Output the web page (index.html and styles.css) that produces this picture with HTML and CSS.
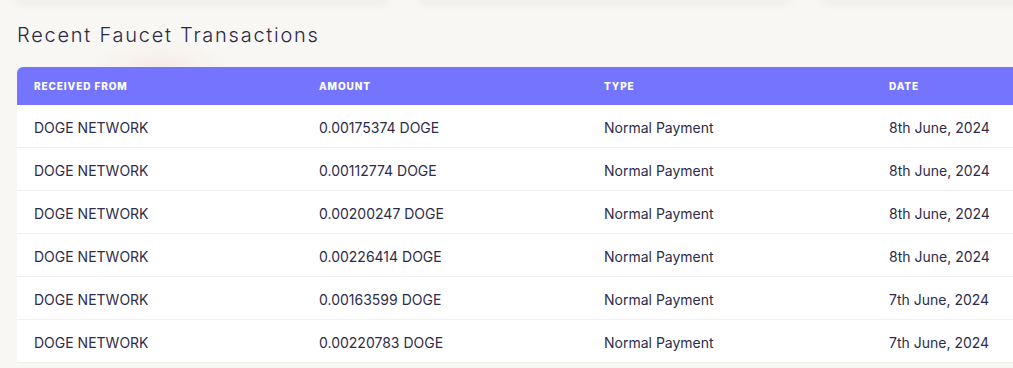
FILE: index.html
```html
<!DOCTYPE html>
<html>
<head>
<meta charset="utf-8">
<link rel="stylesheet" href="styles.css">
</head>
<body>
<div class="page">
  <div class="cards">
    <div class="card"></div>
    <div class="card"></div>
    <div class="card"></div>
  </div>
  <h2 class="title">Recent Faucet Transactions</h2>
  <div class="table-wrap">
    <table class="tx">
      <thead>
        <tr><th>Received From</th><th>Amount</th><th>Type</th><th>Date</th></tr>
      </thead>
      <tbody>
        <tr><td>DOGE NETWORK</td><td>0.00175374 DOGE</td><td>Normal Payment</td><td>8th June, 2024</td></tr>
        <tr><td>DOGE NETWORK</td><td>0.00112774 DOGE</td><td>Normal Payment</td><td>8th June, 2024</td></tr>
        <tr><td>DOGE NETWORK</td><td>0.00200247 DOGE</td><td>Normal Payment</td><td>8th June, 2024</td></tr>
        <tr><td>DOGE NETWORK</td><td>0.00226414 DOGE</td><td>Normal Payment</td><td>8th June, 2024</td></tr>
        <tr><td>DOGE NETWORK</td><td>0.00163599 DOGE</td><td>Normal Payment</td><td>7th June, 2024</td></tr>
        <tr><td>DOGE NETWORK</td><td>0.00220783 DOGE</td><td>Normal Payment</td><td>7th June, 2024</td></tr>
      </tbody>
    </table>
  </div>
</div>
</body>
</html>
```
FILE: styles.css
```css
html, body {
  margin: 0;
  padding: 0;
  height: 100%;
  overflow: hidden;
}
body {
  background: #f8f7f4;
  font-family: Inter, "Noto Sans", sans-serif;
  color: #2e2c4a;
}
.page {
  padding: 0 0 0 17px;
  background: radial-gradient(ellipse 70px 30px at 160px 68px, rgba(240, 215, 205, 0.35), rgba(248, 247, 244, 0));
}
.cards {
  display: flex;
  gap: 33px;
  height: 0;
  margin-right: -200px;
}
.card {
  flex: 0 0 370px;
  height: 0;
  border-radius: 8px;
  box-shadow: 0 1px 9px 1px rgba(0, 0, 0, 0.16);
  background: #fff;
}
.title {
  margin: 0;
  padding-top: 22px;
  font-size: 20px;
  line-height: 26px;
  font-weight: 300;
  letter-spacing: 1.75px;
  color: #2b2a45;
}
.table-wrap {
  margin-top: 19px;
  width: 1140px;
  border-radius: 6px 6px 0 0;
  overflow: hidden;
  background: #fff;
}
.tx {
  width: 1140px;
  border-collapse: collapse;
  table-layout: fixed;
}
.tx th {
  background: #7574ff;
  color: #fff;
  text-align: left;
  text-transform: uppercase;
  font-size: 10px;
  font-weight: 800;
  letter-spacing: 0.9px;
  height: 38px;
  padding: 0 17px;
}
.tx td {
  height: 40px;
  padding: 2px 17px 0;
  font-size: 14px;
  color: #2e2c4a;
  border-bottom: 1px solid #efefef;
}
```
